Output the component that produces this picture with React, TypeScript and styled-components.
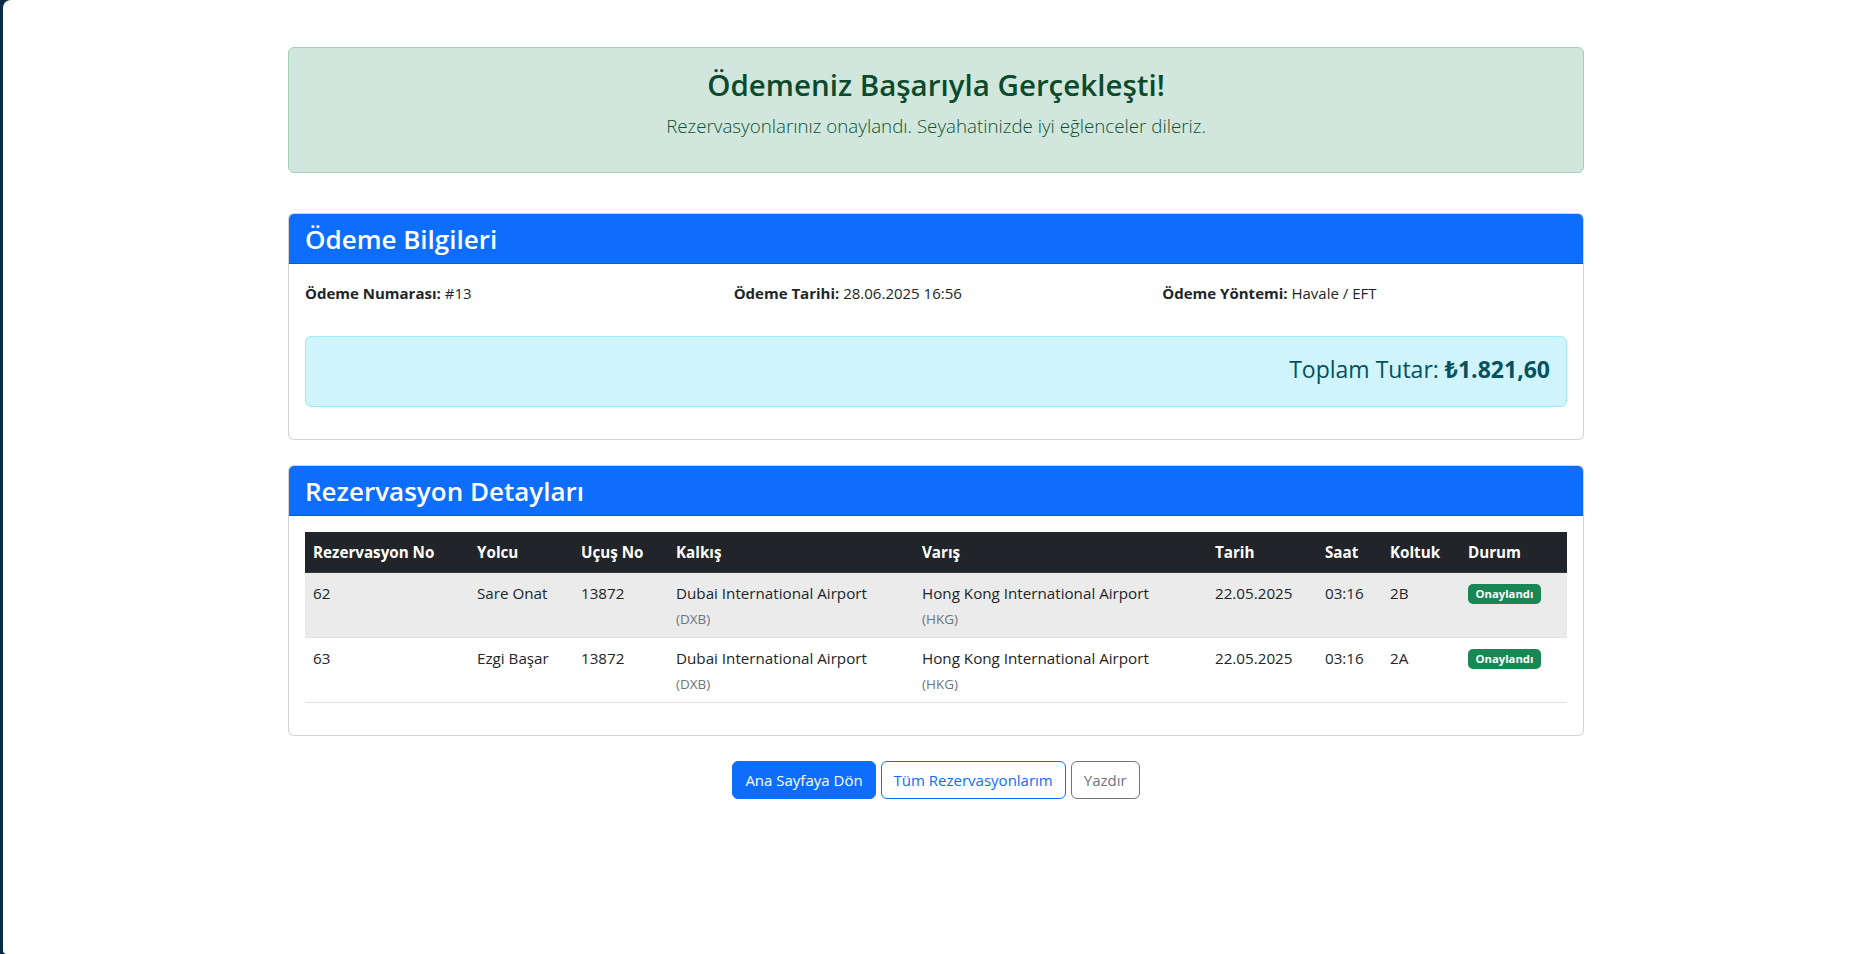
import styled, { createGlobalStyle } from "styled-components";

const GlobalStyle = createGlobalStyle`
    html, body {
        margin: 0;
        padding: 0;
        background-color: #0b2b47;
    }
    body {
        font-family: "Open Sans", "Noto Sans", sans-serif;
        font-size: 15px;
        color: #212529;
    }
    * {
        box-sizing: border-box;
    }
`;

type Reservation = {
    id: number;
    passenger: string;
    flight: string;
    from: string;
    fromCode: string;
    to: string;
    toCode: string;
    date: string;
    time: string;
    seat: string;
};

const reservations: Reservation[] = [
    {
        id: 62,
        passenger: "Sare Onat",
        flight: "13872",
        from: "Dubai International Airport",
        fromCode: "DXB",
        to: "Hong Kong International Airport",
        toCode: "HKG",
        date: "22.05.2025",
        time: "03:16",
        seat: "2B",
    },
    {
        id: 63,
        passenger: "Ezgi Başar",
        flight: "13872",
        from: "Dubai International Airport",
        fromCode: "DXB",
        to: "Hong Kong International Airport",
        toCode: "HKG",
        date: "22.05.2025",
        time: "03:16",
        seat: "2A",
    },
];

const columns = [
    { label: "Rezervasyon No", width: 164 },
    { label: "Yolcu", width: 104 },
    { label: "Uçuş No", width: 95 },
    { label: "Kalkış", width: 246 },
    { label: "Varış", width: 293 },
    { label: "Tarih", width: 110 },
    { label: "Saat", width: 65 },
    { label: "Koltuk", width: 78 },
    { label: "Durum", width: 107 },
];

const App = () => {
    return (
        <>
            <GlobalStyle />
            <Page>
                <Container>
                    <SuccessAlert>
                        <SuccessTitle>Ödemeniz Başarıyla Gerçekleşti!</SuccessTitle>
                        <SuccessText>
                            Rezervasyonlarınız onaylandı. Seyahatinizde iyi eğlenceler dileriz.
                        </SuccessText>
                    </SuccessAlert>

                    <Card>
                        <CardHeader>
                            <CardTitle>Ödeme Bilgileri</CardTitle>
                        </CardHeader>
                        <CardBody>
                            <InfoRow>
                                <InfoItem>
                                    <strong>Ödeme Numarası:</strong> #13
                                </InfoItem>
                                <InfoItem>
                                    <strong>Ödeme Tarihi:</strong> 28.06.2025 16:56
                                </InfoItem>
                                <InfoItem>
                                    <strong>Ödeme Yöntemi:</strong> Havale / EFT
                                </InfoItem>
                            </InfoRow>
                            <TotalBox>
                                <TotalText>
                                    Toplam Tutar: <strong>₺1.821,60</strong>
                                </TotalText>
                            </TotalBox>
                        </CardBody>
                    </Card>

                    <Card>
                        <CardHeader>
                            <CardTitle>Rezervasyon Detayları</CardTitle>
                        </CardHeader>
                        <CardBody>
                            <Table>
                                <colgroup>
                                    {columns.map((c) => (
                                        <Col key={c.label} $width={c.width} />
                                    ))}
                                </colgroup>
                                <thead>
                                    <tr>
                                        {columns.map((c) => (
                                            <Th key={c.label}>{c.label}</Th>
                                        ))}
                                    </tr>
                                </thead>
                                <tbody>
                                    {reservations.map((r, i) => (
                                        <Tr key={r.id} $striped={i % 2 === 0}>
                                            <Td>{r.id}</Td>
                                            <Td>{r.passenger}</Td>
                                            <Td>{r.flight}</Td>
                                            <Td>
                                                {r.from}
                                                <Muted>({r.fromCode})</Muted>
                                            </Td>
                                            <Td>
                                                {r.to}
                                                <Muted>({r.toCode})</Muted>
                                            </Td>
                                            <Td>{r.date}</Td>
                                            <Td>{r.time}</Td>
                                            <Td>{r.seat}</Td>
                                            <Td>
                                                <Badge>Onaylandı</Badge>
                                            </Td>
                                        </Tr>
                                    ))}
                                </tbody>
                            </Table>
                        </CardBody>
                    </Card>

                    <Actions>
                        <Button $variant="primary">Ana Sayfaya Dön</Button>
                        <Button $variant="outlinePrimary">Tüm Rezervasyonlarım</Button>
                        <Button $variant="outlineSecondary">Yazdır</Button>
                    </Actions>
                </Container>
            </Page>
        </>
    );
};

const Page = styled.div`
    min-height: 954px;
    margin-left: 3px;
    padding: 47px 0 40px 5px;
    background-color: #ffffff;
    border-radius: 8px 0 0 4px;
`;

const Container = styled.div`
    width: 1296px;
    margin: 0 auto;
`;

const SuccessAlert = styled.div`
    background-color: #d1e7dd;
    border: 1px solid #a3cfbb;
    border-radius: 6px;
    color: #0f5132;
    text-align: center;
    padding: 20px 16px 31px;
    margin-bottom: 40px;
`;

const SuccessTitle = styled.h3`
    margin: 0;
    font-size: 29.5px;
    line-height: 34px;
    font-weight: 600;
    color: #0c4a2c;
`;

const SuccessText = styled.p`
    margin: 9px 0 0;
    font-size: 18.75px;
    line-height: 30px;
    font-weight: 300;
    color: #0f5132;
`;

const Card = styled.div`
    border: 1px solid rgba(0, 0, 0, 0.175);
    border-radius: 6px;
    background-color: #ffffff;
    overflow: hidden;
    margin-bottom: 25px;
`;

const CardHeader = styled.div`
    background-color: #0d6efd;
    color: #ffffff;
    padding: 11px 16px 9px;
    border-bottom: 1px solid rgba(0, 0, 0, 0.175);
`;

const CardTitle = styled.h4`
    margin: 0;
    font-size: 26px;
    line-height: 29px;
    font-weight: 600;
`;

const CardBody = styled.div`
    padding: 16px;
`;

const InfoRow = styled.div`
    display: grid;
    grid-template-columns: repeat(3, 1fr);
    column-gap: 24px;
    margin-bottom: 16px;
`;

const InfoItem = styled.p`
    margin: 1px 0 15px;
    font-size: 15px;
    line-height: 24px;

    strong {
        font-weight: 700;
    }
`;

const TotalBox = styled.div`
    background-color: #cff4fc;
    border: 1px solid #9eeaf9;
    border-radius: 6px;
    color: #055160;
    padding: 16px;
    margin-bottom: 16px;
    text-align: right;
`;

const TotalText = styled.h4`
    margin: 2px 0 6px;
    font-size: 23px;
    line-height: 29px;
    font-weight: 500;

    strong {
        font-weight: 700;
    }
`;

const Table = styled.table`
    width: 100%;
    border-collapse: collapse;
    table-layout: fixed;
    margin-bottom: 16px;
    font-size: 15.2px;
`;

const Col = styled.col<{ $width: number }>`
    width: ${(p) => p.$width}px;
`;

const Th = styled.th`
    background-color: #212529;
    color: #ffffff;
    font-weight: 700;
    text-align: left;
    padding: 8px;
    line-height: 24px;
    border-bottom: 1px solid #32383e;
    white-space: nowrap;
`;

const Tr = styled.tr<{ $striped: boolean }>`
    background-color: ${(p) => (p.$striped ? "#ebebeb" : "#ffffff")};
`;

const Td = styled.td`
    padding: 8px;
    line-height: 24px;
    vertical-align: top;
    border-bottom: 1px solid #dee2e6;
    color: #212529;
`;

const Muted = styled.small`
    display: block;
    margin-top: 4px;
    font-size: 13.5px;
    line-height: 20px;
    color: #6c757d;
`;

const Badge = styled.span`
    display: inline-block;
    background-color: #198754;
    color: #ffffff;
    font-size: 11.3px;
    font-weight: 700;
    line-height: 1;
    padding: 4.5px 7.5px;
    border-radius: 5px;
    vertical-align: 1px;
`;

const Actions = styled.div`
    display: flex;
    justify-content: center;
    gap: 5px;
`;

const buttonColors = {
    primary: { bg: "#0d6efd", border: "#0d6efd", color: "#ffffff" },
    outlinePrimary: { bg: "#ffffff", border: "#0d6efd", color: "#0d6efd" },
    outlineSecondary: { bg: "#ffffff", border: "#6c757d", color: "#6c757d" },
};

const Button = styled.button<{ $variant: keyof typeof buttonColors }>`
    font-family: inherit;
    font-size: 15px;
    line-height: 24px;
    padding: 6px 12px;
    border-radius: 6px;
    border: 1px solid ${(p) => buttonColors[p.$variant].border};
    background-color: ${(p) => buttonColors[p.$variant].bg};
    color: ${(p) => buttonColors[p.$variant].color};
    cursor: pointer;
`;

export default App;
